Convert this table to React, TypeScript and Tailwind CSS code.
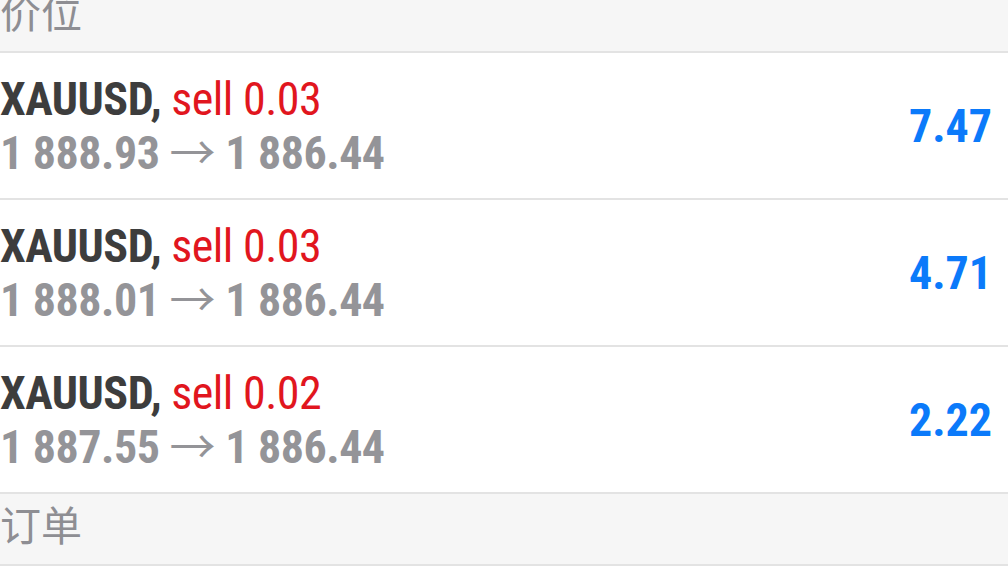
import React from 'react'

interface Position {
  symbol: string
  side: string
  volume: string
  openPrice: string
  currentPrice: string
  profit: string
}

const positions: Position[] = [
  { symbol: 'XAUUSD', side: 'sell', volume: '0.03', openPrice: '1 888.93', currentPrice: '1 886.44', profit: '7.47' },
  { symbol: 'XAUUSD', side: 'sell', volume: '0.03', openPrice: '1 888.01', currentPrice: '1 886.44', profit: '4.71' },
  { symbol: 'XAUUSD', side: 'sell', volume: '0.02', openPrice: '1 887.55', currentPrice: '1 886.44', profit: '2.22' },
]

const numFont = "font-['Roboto_Condensed','Roboto','Liberation_Sans',sans-serif]"

function SectionHeader({ title }: { title: string }) {
  return (
    <div className="flex h-[72px] items-center border-b-2 border-[#e3e3e3] bg-[#f6f6f6] pb-[12px]">
      <span className="font-['Noto_Sans_CJK_SC','Noto_Sans',sans-serif] text-[41px] leading-none text-[#8e8e93]">
        {title}
      </span>
    </div>
  )
}

function PositionRow({ p }: { p: Position }) {
  return (
    <div className="flex h-[147px] items-center justify-between border-b-2 border-[#e3e3e3] bg-white pr-4">
      <div className={`${numFont} text-[46px] leading-[50px] tracking-[-0.5px]`}>
        <div className="whitespace-nowrap">
          <span className="font-bold text-[#3d3d3d]">{p.symbol},</span>{' '}
          <span className="text-[#e1161e]">
            {p.side} {p.volume}
          </span>
        </div>
        <div className="whitespace-nowrap font-bold text-[#949498]">
          {p.openPrice}{' '}
          <span className="font-['Noto_Sans_CJK_SC',sans-serif] font-normal">→</span>{' '}
          {p.currentPrice}
        </div>
      </div>
      <div className={`${numFont} text-[46px] font-bold leading-none text-[#0b7afa]`}>{p.profit}</div>
    </div>
  )
}

export default function App() {
  return (
    <div className="h-[573px] overflow-hidden bg-white">
      <div className="-mt-[19px]">
        <SectionHeader title="价位" />
        {positions.map((p, i) => (
          <PositionRow key={i} p={p} />
        ))}
        <SectionHeader title="订单" />
      </div>
    </div>
  )
}
